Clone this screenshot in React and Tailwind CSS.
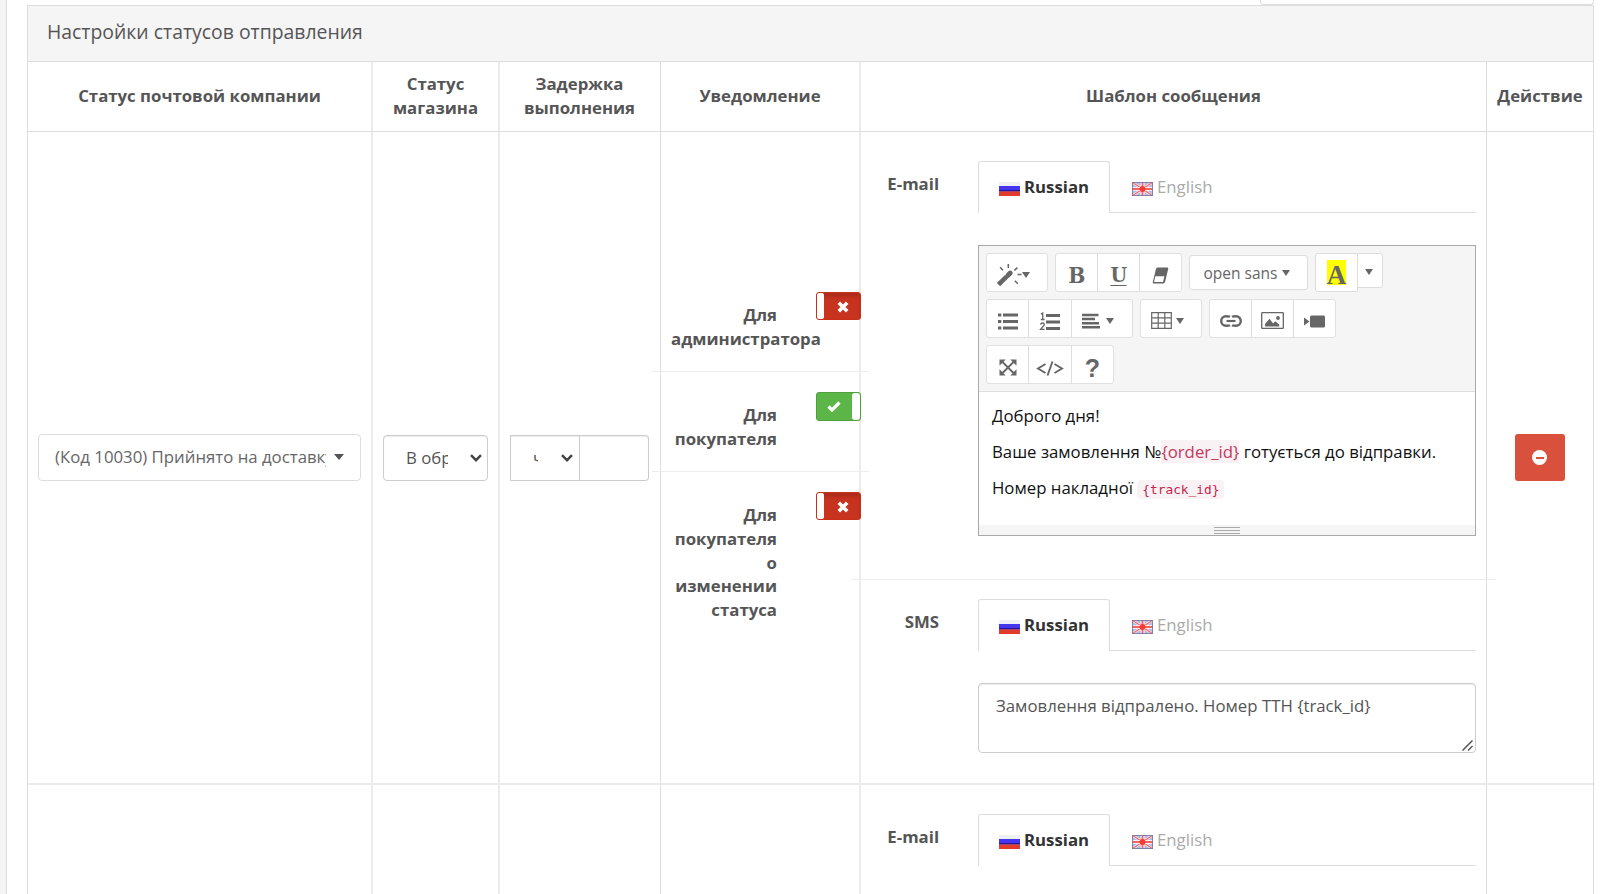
import React, { useState } from "react";

const GRID = "grid grid-cols-[345px_127px_161px_200px_626px_106px]";

// Small filled triangle used by every dropdown
function Caret({ className = "" }) {
  return (
    <svg viewBox="0 0 10 6" preserveAspectRatio="none" className={`shrink-0 ${className}`} fill="currentColor">
      <path d="M0 0h10L5 6z" />
    </svg>
  );
}

function Chevron() {
  return (
    <svg viewBox="0 0 12 8" className="w-3 h-2 shrink-0" fill="none" stroke="#444" strokeWidth="2.4">
      <path d="M1 1.2l5 5 5-5" />
    </svg>
  );
}

function FlagRu() {
  return (
    <svg viewBox="0 0 21 14" className="w-[21px] h-[14px] shrink-0">
      <rect width="21" height="14" fill="#eef0f4" />
      <rect y="4" width="21" height="5.5" fill="#4335f0" />
      <rect y="8" width="21" height="1.5" fill="#2a1590" />
      <rect y="9.5" width="21" height="4.5" fill="#e23a2c" />
    </svg>
  );
}

function FlagGb() {
  return (
    <svg viewBox="0 0 21 14" className="w-[21px] h-[14px] shrink-0">
      <rect width="21" height="14" fill="#a9bcec" />
      <path d="M0 0l21 14M21 0L0 14" stroke="#fbe9ea" strokeWidth="2.6" />
      <path d="M0 0l21 14M21 0L0 14" stroke="#f0686a" strokeWidth="1.1" />
      <path d="M10.5 0v14M0 7h21" stroke="#fbeff0" strokeWidth="4" />
      <path d="M10.5 0v14M0 7h21" stroke="#f4655f" strokeWidth="1.8" />
      <circle cx="10.5" cy="7" r="3" fill="#f23c36" />
      <rect x=".5" y=".5" width="20" height="13" fill="none" stroke="#6f7399" strokeOpacity=".8" />
    </svg>
  );
}

const icons = {
  magic: (
    <svg viewBox="0 0 25 24" className="w-[25px] h-6 shrink-0" fill="none" stroke="currentColor">
      <path d="M1.500 21.500L9.600 13.600" strokeWidth="4.600" />
      <path d="M11 12.300l2.200-2.200" strokeWidth="5" strokeLinecap="round" />
      <path d="M3 4.200l3 3M11.300 1v4M20.400 4.600l-3 2.800M20.500 11.600h4M17.800 17.800l3 3" strokeWidth="1.500" />
    </svg>
  ),
  eraser: (
    <svg viewBox="0 0 18 17" className="w-[17px] h-[17px]" preserveAspectRatio="none">
      <path d="M6 .5h10.2q1.3 0 1 1.3l-3.3 13q-.4 1.7-2 1.7H1.8q-1.3 0-1-1.3l3.3-13Q4.500.5 6 .5z" fill="currentColor" />
      <path d="M3.600 9.300h9.500L11.700 14.900H2.100z" fill="#fff" />
    </svg>
  ),
  ul: (
    <svg viewBox="0 0 20 17" className="w-5 h-[17px]" fill="currentColor">
      <path d="M0 .5h3.300v3H0zM0 7h3.300v3H0zM0 13.500h3.300v3H0zM5 .5h15v3H5zM5 7h15v3H5zM5 13.500h15v3H5z" />
    </svg>
  ),
  ol: (
    <svg viewBox="0 0 20 17" className="w-5 h-[17px] overflow-visible" fill="currentColor">
      <path d="M6 1h14v3H6zM6 7.500h14v3H6zM6 14h14v3H6z" />
      <path d="M.8 1.300L2.700 0v6.500M.8 6.500h3.800M.6 11.600q.3-1.600 1.900-1.600 1.800 0 1.800 1.500 0 1-1.500 2.300L.6 16.300h4" fill="none" stroke="currentColor" strokeWidth="1.300" />
    </svg>
  ),
  align: (
    <svg viewBox="0 0 18 16" className="w-[18px] h-4" fill="currentColor">
      <path d="M0 .8h16.500v2.500H0zM0 4.800h13v2.500H0zM0 8.900h17v2.500H0zM0 13h18v2.500H0z" />
    </svg>
  ),
  table: (
    <svg viewBox="0 0 21 17" className="w-[21px] h-[17px]" fill="none" stroke="currentColor" strokeWidth="1.200">
      <path d="M.7.7h19.600v15.600H.7zM7.200.7v15.600M13.800.7v15.600M.7 5.900h19.600M.7 11.100h19.600" />
    </svg>
  ),
  link: (
    <svg viewBox="0 0 22 12" className="w-[22px] h-3" fill="none" stroke="currentColor" strokeWidth="2.400">
      <path d="M10 1.800C9 1.300 8 1.200 6 1.200a4.800 4.800 0 0 0 0 9.600c2 0 3 0 4-.6M12 10.200c1 .6 2 .6 4 .6a4.800 4.800 0 0 0 0-9.600c-2 0-3 0-4 .6" />
      <path d="M6.500 6h9" strokeWidth="2.200" />
    </svg>
  ),
  picture: (
    <svg viewBox="0 0 23 17" className="w-[23px] h-[17px]">
      <rect x=".7" y=".7" width="21.600" height="15.600" rx=".6" fill="none" stroke="currentColor" strokeWidth="1.300" />
      <path d="M4 14.600v-2.500l4.500-5.300 3.700 4.600 2-2.200 4 3.300v2.100z" fill="currentColor" />
      <circle cx="17" cy="6" r="1.900" fill="currentColor" />
    </svg>
  ),
  video: (
    <svg viewBox="0 0 21 13" className="w-[21px] h-[13px]" fill="currentColor">
      <path d="M0 2.500l5.500 4L0 10.500z" />
      <rect x="6" y=".5" width="15" height="12" rx="1.500" />
    </svg>
  ),
  expand: (
    <svg viewBox="0 0 18 17" className="w-[18px] h-[17px]" fill="currentColor">
      <path d="M2.500 2l13 13M15.500 2l-13 13" stroke="currentColor" strokeWidth="1.900" />
      <path d="M.5.5h6.200l-6.200 6.200zM17.500.5h-6.200l6.200 6.200zM.5 16.500h6.200l-6.200-6.200zM17.500 16.500h-6.200l6.200-6.200z" />
    </svg>
  ),
  code: (
    <svg viewBox="0 0 28 15" className="w-7 h-[15px]" fill="none" stroke="currentColor" strokeWidth="1.900">
      <path d="M9.500 3L2 7.500 9.500 12M18.500 3L26 7.500 18.500 12M16.500.5l-5 14" />
    </svg>
  ),
};

function Group({ children }) {
  return (
    <div className="flex items-start rounded-[3px] text-[#666] divide-x divide-[#ddd] border border-[#e0e0e0] bg-white">
      {children}
    </div>
  );
}

function Tool({ children, className = "w-[42px]" }) {
  return (
    <button type="button" className={`flex h-[37px] items-center justify-center ${className}`}>
      {children}
    </button>
  );
}

function Editor() {
  return (
    <div className="w-[498px] h-[291px] border border-[#a9a9a9] flex flex-col">
      <div className="h-[146px] bg-[#f5f5f5] border-b border-[#ddd] pl-[7px] pt-[7px] flex flex-col gap-[7px]">
        <div className="flex items-start gap-[7px] h-[39px]">
          <Group>
            <Tool className="w-[60px] pr-[8px] pt-[5px]">
              {icons.magic}
              <Caret className="w-2 h-[6px]" />
            </Tool>
          </Group>
          <Group>
            <Tool>
              <span className="font-['DejaVu_Serif'] font-bold text-[23px] scale-x-[.88] pt-1">B</span>
            </Tool>
            <Tool>
              <span className="font-['DejaVu_Serif'] font-bold text-[20px] leading-[18px] scale-x-[.95] pb-px mt-[6px] border-b border-[#666]">U</span>
            </Tool>
            <Tool className="w-[41px] pt-[6px]">{icons.eraser}</Tool>
          </Group>
          <div className="mt-[2px] h-[35px] w-[119px] flex items-center justify-center gap-[5px] pr-[3px] pt-px rounded-[3px] border border-[#ddd] bg-white text-[#666] text-[15.500px]">
            open sans
            <Caret className="w-2 h-[6px]" />
          </div>
          <div className="flex items-start text-[#666]">
            <div className="w-[43px] h-[39px] border border-[#ddd] rounded-l-[3px] bg-white flex items-center justify-center">
              <span className="w-[19px] h-[25px] bg-[#ff0] flex items-center justify-center font-['Liberation_Serif'] font-bold text-[27px] pt-[5px]">A</span>
            </div>
            <div className="w-[25px] h-[35px] border border-l-0 border-[#ddd] rounded-r-[3px] bg-white flex items-center justify-center pt-0.5 pr-0.5">
              <Caret className="w-2 h-[6px]" />
            </div>
          </div>
        </div>
        <div className="flex items-start gap-[7px] h-[39px]">
          <Group>
            <Tool className="w-[42px] pt-[5px]">{icons.ul}</Tool>
            <Tool className="w-[43px] pt-[5px]">{icons.ol}</Tool>
            <Tool className="w-[60px] gap-[6px] pt-[5px] pr-[8px]">
              {icons.align}
              <Caret className="w-2 h-[6px]" />
            </Tool>
          </Group>
          <Group>
            <Tool className="w-[60px] gap-1 pt-[4px] pr-[8px]">
              {icons.table}
              <Caret className="w-2 h-[6px]" />
            </Tool>
          </Group>
          <Group>
            <Tool className="w-[42px] pt-[4px]">{icons.link}</Tool>
            <Tool className="w-[42px] pt-[4px]">{icons.picture}</Tool>
            <Tool className="w-[41px] pt-[5px]">{icons.video}</Tool>
          </Group>
        </div>
        <div className="flex items-start h-[39px]">
          <Group>
            <Tool className="w-[42px] pt-[5px]">{icons.expand}</Tool>
            <Tool className="w-[43px] pt-[7px]">{icons.code}</Tool>
            <Tool className="w-[41px]">
              <span className="font-['Liberation_Sans'] font-bold text-[25px] pt-[7px]">?</span>
            </Tool>
          </Group>
        </div>
      </div>
      <div className="flex-1 px-[13px] pt-3 text-[#111] leading-6 flex flex-col gap-3 whitespace-nowrap">
        <p>Доброго дня!</p>
        <p>
          Ваше замовлення №<span className="bg-[#f9f2f4] text-[#c7375e]">{"{order_id}"}</span> готується до відправки.
        </p>
        <p>
          Номер накладної{" "}
          <code className="bg-[#f9f2f4] text-[#c7254e] rounded-[4px] px-[5px] py-[2px] font-['DejaVu_Sans_Mono'] text-[12.800px]">
            {"{track_id}"}
          </code>
        </p>
      </div>
      <div className="h-[10px] bg-[#f5f5f5] flex flex-col items-center justify-center gap-[2px]">
        <div className="w-[26px] h-px bg-[#a9a9a9]" />
        <div className="w-[26px] h-px bg-[#a9a9a9]" />
        <div className="w-[26px] h-px bg-[#a9a9a9]" />
      </div>
    </div>
  );
}

function LangTabs() {
  const [lang, setLang] = useState("ru");
  const active = "w-[132px] border border-b-0 border-[#ddd] rounded-t-[3px] text-[#333] font-bold pb-px";
  const idle = "w-[126px] border-b border-[#ddd] text-[#aaa]";
  return (
    <div className="flex h-[52px] w-[498px]">
      <button type="button" onClick={() => setLang("ru")} className={`flex items-center gap-1 pl-5 ${lang === "ru" ? active : idle}`}>
        <span className="pt-[4px]"><FlagRu /></span>
        Russian
      </button>
      <button type="button" onClick={() => setLang("en")} className={`flex items-center gap-1 pl-[22px] ${lang === "en" ? active : idle}`}>
        <span className="pt-[4px]"><FlagGb /></span>
        English
      </button>
      <div className="flex-1 border-b border-[#ddd]" />
    </div>
  );
}

function Field({ label, children }) {
  return (
    <div className="flex">
      <div className="w-[78px] mr-[39px] pt-[11px] text-right font-bold leading-6">{label}</div>
      <div>
        <LangTabs />
        {children}
      </div>
    </div>
  );
}

function Toggle({ on }) {
  if (on) {
    return (
      <div className="h-[29px] w-[45px] rounded-[3px] border border-[#4fa03c] bg-[#5cb547] flex items-stretch justify-between">
        <svg viewBox="0 0 14 11" className="w-[14px] h-[11px] ml-[10px] mt-2">
          <path d="M1.500 5.500l3.500 3.500 7.500-7.500" fill="none" stroke="#fff" strokeWidth="3.200" />
        </svg>
        <div className="w-[8px] rounded-[3px] bg-white" />
      </div>
    );
  }
  return (
    <div className="h-[28px] w-[45px] rounded-[3px] border border-[#c9301c] bg-[#c7331e] shadow-[inset_0_4px_3px_#b02d1b] flex items-stretch justify-between">
      <div className="w-[7px] rounded-[2px] bg-white" />
      <svg viewBox="0 0 12 12" className="w-3 h-3 mr-[11px] mt-2">
        <path d="M1.800 1.800l8.400 8.400M10.200 1.800l-8.400 8.400" stroke="#fff" strokeWidth="3.600" />
      </svg>
    </div>
  );
}

const notifications = [
  { label: "Для администратора", on: false, cls: "h-[100px] border-b" },
  { label: "Для покупателя", on: true, cls: "h-[100px] border-b" },
  { label: "Для покупателя о изменении статуса", on: false, cls: "h-[152px]" },
];

export default function App() {
  const [sms, setSms] = useState("Замовлення відпралено. Номер ТТН {track_id}");
  const cell = "border-r-2 border-[#ebebeb]";
  const thinCell = "border-r border-[#ddd]";

  return (
    <div className="w-[1600px] h-[894px] overflow-hidden bg-white flex font-['Open_Sans','Noto_Sans',sans-serif] text-[16.800px] leading-6 text-[#555]">
      <div className="w-[7px] bg-[#f5f5f5] border-r border-[#ddd] mr-5 shrink-0" />
      <div className="w-[1567px] shrink-0">
        <div className="h-[5px] flex justify-end">
          <div className="w-[334px] border border-t-0 border-[#ddd] rounded-b-[4px]" />
        </div>
        <div className="border border-b-0 border-[#ddd]">
          <div className="h-[56px] bg-[#f5f5f5] border-b border-[#ddd] flex items-center pl-[19px] text-[19.400px] pb-[3px]">
            Настройки статусов отправления
          </div>

          <div className={`${GRID} h-[70px] border-b border-[#ddd] font-bold text-center`}>
            <div className={`${cell} flex items-center justify-center pb-0.5`}>Статус почтовой компании</div>
            <div className={`${cell} flex items-center justify-center px-4 pb-0.5`}>Статус магазина</div>
            <div className={`${thinCell} flex items-center justify-center pl-[15px] pr-4 pb-0.5`}>Задержка выполнения</div>
            <div className={`${cell} flex items-center justify-center pb-0.5`}>Уведомление</div>
            <div className={`${thinCell} flex items-center justify-center pb-0.5`}>Шаблон сообщения</div>
            <div className="flex items-center justify-center pb-0.5">Действие</div>
          </div>

          <div className={`${GRID} h-[653px] border-b-2 border-[#ebebeb]`}>
            <div className={`${cell} flex items-center pl-[10px]`}>
              <button type="button" className="w-[323px] h-[47px] border border-[#ddd] rounded-[4px] flex items-center pl-4 pb-0.5">
                <span className="w-[271px] overflow-hidden whitespace-nowrap text-left text-[#666]">(Код 10030) Прийнято на доставку</span>
                <Caret className="w-[10px] h-[6px] ml-[8px]" />
              </button>
            </div>
            <div className={`${cell} flex items-center pl-[10px]`}>
              <div className="w-[105px] h-[46px] border border-[#ccc] rounded-[4px] shadow-[inset_0_1px_1px_rgba(0,0,0,0.075)] flex items-center pl-[22px]">
                <span className="w-[42px] mr-[22px] overflow-hidden whitespace-nowrap">В обработке</span>
                <Chevron />
              </div>
            </div>
            <div className={`${thinCell} flex items-center pl-[10px]`}>
              <div className="w-[70px] h-[46px] border border-[#ccc] shadow-[inset_0_1px_1px_rgba(0,0,0,0.075)] flex items-center pl-[22px]">
                <span className="w-[5px] mr-[23px] overflow-hidden whitespace-nowrap">часов</span>
                <Chevron />
              </div>
              <input className="w-[69px] h-[46px] border border-l-0 border-[#ccc] rounded-r-[4px] shadow-[inset_0_1px_1px_rgba(0,0,0,0.075)]" />
            </div>
            <div className={`${cell} pt-[140px]`}>
              {notifications.map((n, i) => (
                <div key={i} className={`${n.cls} -ml-[9px] -mr-[10px] border-[#ededed] flex pl-[19px] pt-5`}>
                  <div className="w-[106px] mr-[39px] pt-[11px] text-right font-bold leading-[23.800px]">{n.label}</div>
                  <div className="relative z-10"><Toggle on={n.on} /></div>
                </div>
              ))}
            </div>
            <div className={`${thinCell} pt-[29px]`}>
              <Field label="E-mail">
                <div className="pt-8">
                  <Editor />
                </div>
              </Field>
              <div className="-mx-[9px] mt-[43px] mb-[19px] h-px bg-[#ededed]" />
              <Field label="SMS">
                <div className="pt-8 relative">
                  <textarea
                    value={sms}
                    onChange={(e) => setSms(e.target.value)}
                    className="block w-[498px] h-[70px] resize-none rounded-[4px] border border-[#ccc] pl-[17px] pt-[10px] leading-6 shadow-[inset_0_1px_1px_rgba(0,0,0,0.075)]"
                  />
                  <svg viewBox="0 0 11 11" className="absolute right-[3px] bottom-[2px] w-[11px] h-[11px]" stroke="#555" strokeWidth="1.500">
                    <path d="M.5 10.500l10-10M6 10.500l4.500-4.500" />
                  </svg>
                </div>
              </Field>
            </div>
            <div className="flex items-center justify-center">
              <button type="button" className="w-[50px] h-[47px] -ml-[1px] rounded-[3px] bg-[#d9503c] flex items-center justify-center">
                <span className="w-[15px] h-[15px] rounded-full bg-white flex items-center justify-center">
                  <span className="w-2 h-[2px] bg-[#d9503c]" />
                </span>
              </button>
            </div>
          </div>

          <div className={`${GRID} h-[109px]`}>
            <div className={cell} />
            <div className={cell} />
            <div className={thinCell} />
            <div className={cell} />
            <div className={`${thinCell} pt-[29px]`}>
              <Field label="E-mail" />
            </div>
            <div />
          </div>
        </div>
      </div>
    </div>
  );
}
